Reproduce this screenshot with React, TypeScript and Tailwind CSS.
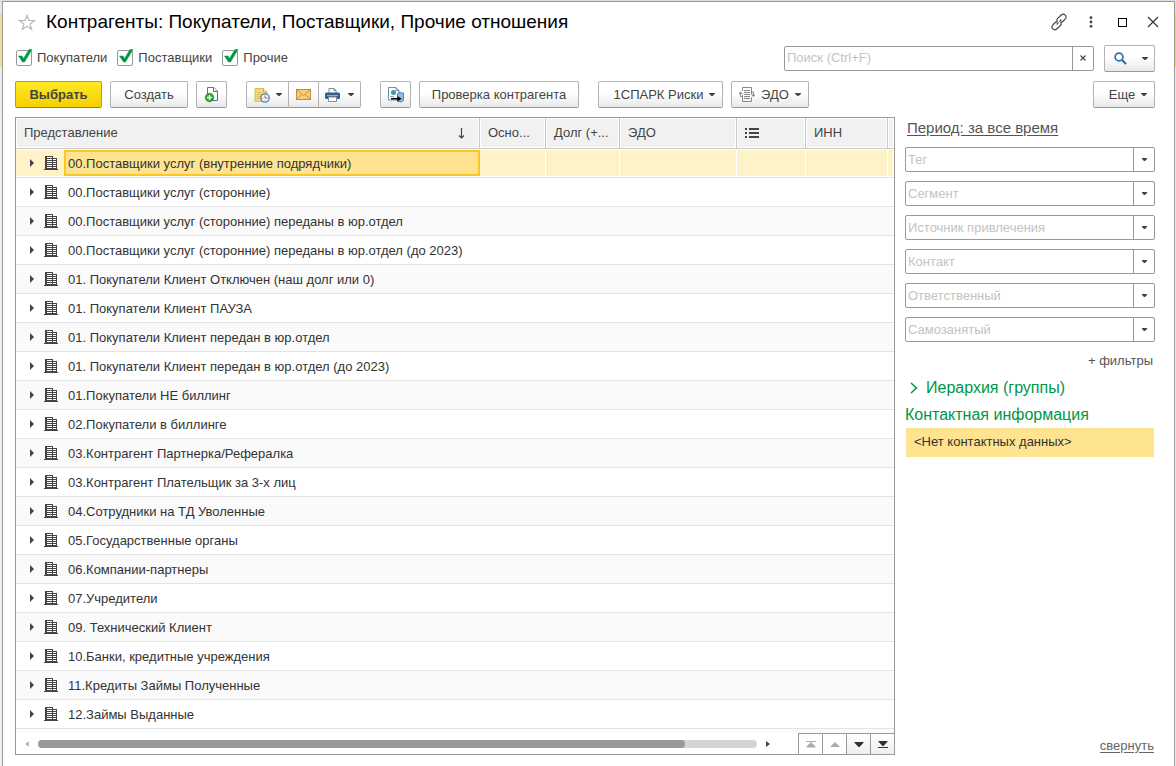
import { ReactNode, useState } from 'react';

const groups = [
  '00.Поставщики услуг (внутренние подрядчики)',
  '00.Поставщики услуг (сторонние)',
  '00.Поставщики услуг (сторонние) переданы в юр.отдел',
  '00.Поставщики услуг (сторонние) переданы в юр.отдел (до 2023)',
  '01. Покупатели Клиент Отключен (наш долг или 0)',
  '01. Покупатели Клиент ПАУЗА',
  '01. Покупатели Клиент передан в юр.отдел',
  '01. Покупатели Клиент передан в юр.отдел (до 2023)',
  '01.Покупатели НЕ биллинг',
  '02.Покупатели в биллинге',
  '03.Контрагент Партнерка/Рефералка',
  '03.Контрагент Плательщик за 3-х лиц',
  '04.Сотрудники на ТД Уволенные',
  '05.Государственные органы',
  '06.Компании-партнеры',
  '07.Учредители',
  '09. Технический Клиент',
  '10.Банки, кредитные учреждения',
  '11.Кредиты Займы Полученные',
  '12.Займы Выданные',
];

const kinds = ['Покупатели', 'Поставщики', 'Прочие'];
const filters = ['Тег', 'Сегмент', 'Источник привлечения', 'Контакт', 'Ответственный', 'Самозанятый'];

const buttonLook =
  'flex h-[27px] items-center justify-center border border-[#b3b3b3] border-b-[#999] bg-linear-to-b from-white from-45% to-[#e9e9e9] text-[13px] text-[#444]';

const Caret = () => (
  <svg width="6" height="3" viewBox="0 0 6 3" fill="#444" className="shrink-0">
    <path d="M0 0h6v.8L3.500 3h-1L0 .8z" />
  </svg>
);

const StarIcon = () => (
  <svg width="18" height="17" viewBox="0 0 18 17" fill="none" stroke="#b5b5b5" strokeWidth="1.1">
    <path d="M9 1.3l1.9 5.2 5.6.1-4.5 3.4 1.7 5.4L9 12.2l-4.7 3.2L6 10 1.5 6.6l5.6-.1z" />
  </svg>
);

const LinkIcon = () => (
  <svg width="18" height="18" viewBox="0 0 18 18" fill="none" stroke="#444" strokeWidth="1.2" strokeLinecap="round">
    <path d="M7 7.500c-.3-.8 0-1.500.6-2.100l3.400-3.200c1.300-1.200 3-1.200 4.200-.1s1.200 2.900 0 4.100l-2.700 2.600c-.5.500-1.100.7-1.800.6" />
    <path d="M11 10.500c.3.8 0 1.500-.6 2.100L7 15.800c-1.300 1.200-3 1.200-4.200.1s-1.200-2.900 0-4.100l2.700-2.600c.5-.5 1.100-.7 1.800-.6" />
    <path d="M7 11l1.200-1.200M9.800 8.200L11 7" />
  </svg>
);

const DotsIcon = () => (
  <svg width="4" height="12" viewBox="0 0 4 12" fill="#444">
    <circle cx="2" cy="1.7" r="1.4" />
    <circle cx="2" cy="6" r="1.4" />
    <circle cx="2" cy="10.3" r="1.4" />
  </svg>
);

const NewDocIcon = () => (
  <svg width="16" height="17" viewBox="0 0 16 17">
    <path d="M3.5 1.5h6.5l3.5 3.5v9.5h-10z" fill="#fff" stroke="#5f7486" />
    <path d="M9.5 1.5v4h4" fill="#dfe7ee" stroke="#5f7486" />
    <circle cx="5.5" cy="11.5" r="4.3" fill="#2ca03a" stroke="#1b8a2b" strokeWidth=".6" />
    <path d="M5.5 9v5M3 11.5h5" stroke="#fff" strokeWidth="1.4" />
  </svg>
);

const NoteClockIcon = () => (
  <svg width="16" height="16" viewBox="0 0 16 16">
    <path d="M1 1.500h8.500L13 5v9.500H1z" fill="#f5d77c" stroke="#dcb860" />
    <path d="M9.500 1.500V5H13" fill="#fbeaaf" stroke="#cfa646" />
    <path d="M3 5.500h5M3 7.500h4M3 9.500h3M3 11.500h3" stroke="#e2c06a" />
    <circle cx="11" cy="11" r="4.100" fill="#fff" stroke="#4c84bd" strokeWidth="1.400" />
    <path d="M11 8.300V11h2.600" fill="none" stroke="#d0402f" />
    <path d="M8.500 11h1M11 12.500v1" stroke="#4c84bd" />
  </svg>
);

const MailIcon = () => (
  <svg width="15" height="11" viewBox="0 0 15 11">
    <rect x=".5" y=".5" width="14" height="10" fill="#f8cc7c" stroke="#c98a35" />
    <path d="M1 1l6.500 5.500L14 1M1 10l4.500-4.500M14 10L9.500 5.500" fill="none" stroke="#cf8f3a" />
  </svg>
);

const PrinterIcon = () => (
  <svg width="15" height="14" viewBox="0 0 15 14">
    <path d="M4 5V.5h5L11 2.500V5" fill="#fff" stroke="#7c8d9c" />
    <path d="M9 .5v2h2" fill="none" stroke="#7c8d9c" />
    <rect x="0" y="4.500" width="15" height="6.500" rx="1.500" fill="#36618d" />
    <path d="M2 7.500h11" stroke="#8fb0cf" />
    <path d="M3.500 9h8v4.500h-8z" fill="#fff" stroke="#7c8d9c" />
  </svg>
);

const TransferIcon = () => (
  <svg width="17" height="17" viewBox="0 0 17 17">
    <path d="M1.500 1.500h7.500l3 3v9.500h-10.500z" fill="#fff" stroke="#7a8b9a" />
    <path d="M9 1.500v3h3" fill="none" stroke="#7a8b9a" />
    <circle cx="6.500" cy="6.500" r="2.500" fill="#3c8fd0" />
    <path d="M5 5.500l2 .5-.5 2.500" fill="none" stroke="#48b04a" strokeWidth="1.300" />
    <path d="M3 10.500h4" stroke="#9aa8b4" />
    <path d="M10.500 7.500l2-1 4 .5v7.500l-2 1.500-4-.5z" fill="#8ebbe2" stroke="#356fa6" strokeWidth=".8" />
    <path d="M4 12.700h7" stroke="#000" strokeWidth="1.500" />
    <path d="M10.500 10l4 2.700-4 2.700z" fill="#000" />
  </svg>
);

const EdoIcon = () => (
  <svg width="16" height="15" viewBox="0 0 16 15" fill="none" stroke="#888">
    <path d="M3.500 4V.5h9V7M12.500 10.500v4h-9V8" />
    <path d="M5 3.500h6M5 5.500h6M5 7.500h6M5 9.500h6M5 11.500h6" />
    <path d="M1.500 6.500v3h2M14.500 8V5h-2" />
    <path d="M-.5 7L1.500 4.500 4 7zM12 7.500h4.500L14.500 10z" fill="#888" stroke="none" />
  </svg>
);

const SearchIcon = () => (
  <svg width="13" height="13" viewBox="0 0 13 13" fill="none" stroke="#2a6fa8">
    <circle cx="5" cy="5" r="3.9" strokeWidth="1.7" />
    <path d="M8 8l4 4" strokeWidth="2.2" />
  </svg>
);

const ListIcon = () => (
  <svg width="14" height="11" viewBox="0 0 14 11" fill="#444">
    <path d="M0 0h2v2H0zM4 0h10v2H4zM0 4h2v2H0zM4 4h10v2H4zM0 8h2v2H0zM4 8h10v2H4z" />
  </svg>
);

const BuildingIcon = () => (
  <svg width="14" height="14" viewBox="0 0 14 14">
    <path d="M1 0h8v2h4v11h1v1H0v-1h1z" fill="#444" />
    <path
      d="M3 1.500h5M3 3.500h5M3 5.500h5M3 7.500h5M3 9.500h5M3 11.500h5M9 3.500h3M9 5.500h3M9 7.500h3M9 9.500h3M9 11.500h3"
      stroke="#fff"
    />
  </svg>
);

const ComboButton = ({ children, label }: { children: ReactNode; label: string }) => (
  <button aria-label={label} className="flex w-[21px] items-center justify-center border-l border-[#999]">
    {children}
  </button>
);

const App = () => {
  const [selected, setSelected] = useState(0);

  return (
    <div className="flex min-h-screen flex-col bg-[#dedede] pt-px font-['Liberation_Sans',Arial,sans-serif] text-[#444]">
      <div className="flex grow">
        {/* Window behind */}
        <div className="flex w-[2px] shrink-0 flex-col">
          <div className="h-[13px] bg-[#e6e6e6]" />
          <div className="h-[53px] bg-[#f0dc9a]" />
          <div className="h-[50px] bg-[#ececec]" />
          <div className="grow bg-[#f0f0f0]" />
        </div>

        <main className="flex min-w-0 grow flex-col border-x border-t border-[#999] bg-white pr-[19px] pb-[11px] pl-3">
          {/* Title */}
          <header className="flex h-10 items-center">
            <button aria-label="В избранное" className="ml-[3px]">
              <StarIcon />
            </button>
            <h1 className="ml-[10px] text-[19px] text-black">Контрагенты: Покупатели, Поставщики, Прочие отношения</h1>
            <div className="-mr-1 ml-auto flex items-center">
              <button aria-label="Ссылка" className="mr-[21px]"><LinkIcon /></button>
              <button aria-label="Меню" className="mr-[25px]"><DotsIcon /></button>
              <button aria-label="Развернуть" className="mr-5 size-[9px] border border-black" />
              <button aria-label="Закрыть">
                <svg width="12" height="12" viewBox="0 0 12 12" stroke="#333" strokeWidth="1.2">
                  <path d="M1 1l10 10M11 1L1 11" />
                </svg>
              </button>
            </div>
          </header>

          {/* Kinds and search */}
          <div className="flex h-8 items-center">
            <div className="ml-px flex gap-[10px]">
              {kinds.map((kind) => (
                <label key={kind} className="flex items-center gap-[5px] text-[13px]">
                  <span className="relative flex size-4">
                    <input
                      type="checkbox"
                      defaultChecked
                      className="peer size-4 appearance-none rounded-xs border border-[#999] bg-white"
                    />
                    <svg
                      width="16"
                      height="16"
                      viewBox="0 0 16 16"
                      className="pointer-events-none absolute inset-0 hidden overflow-visible peer-checked:block"
                    >
                      <path d="M2.500 6h3.500l1.500 2.500L13-.5h3L8.500 12H6.500z" fill="#009646" stroke="#009646" strokeWidth=".5" />
                    </svg>
                  </span>
                  {kind}
                </label>
              ))}
            </div>
            <div className="ml-auto flex h-[25px] w-[310px] rounded-xs border border-[#999]">
              <input
                aria-label="Поиск"
                placeholder="Поиск (Ctrl+F)"
                className="min-w-0 grow px-[2px] text-[13px] outline-none placeholder:text-[#c3c3c3]"
              />
              <ComboButton label="Очистить">
                <svg width="6" height="6" viewBox="0 0 6 6" stroke="#444" strokeWidth="1.1">
                  <path d="M.5.5l5 5M5.500.5l-5 5" />
                </svg>
              </ComboButton>
            </div>
            <button aria-label="Найти" className={`${buttonLook} ml-[10px] w-[51px] gap-[15px] rounded-xs pl-[2px]`}>
              <SearchIcon />
              <Caret />
            </button>
          </div>

          {/* Toolbar */}
          <div className="mt-[7px] flex">
            <button className="flex h-[27px] w-[87px] items-center justify-center rounded-xs border border-[#c0a000] border-b-[#a08500] bg-linear-to-b from-[#ffe91f] to-[#f5d000] text-[13px] font-bold">
              Выбрать
            </button>
            <button className={`${buttonLook} ml-2 w-[78px] rounded-xs`}>Создать</button>
            <button aria-label="Создать группу" className={`${buttonLook} ml-2 w-[31px] rounded-xs`}>
              <NewDocIcon />
            </button>
            <div className="ml-[19px] flex">
              <button aria-label="Напоминание" className={`${buttonLook} w-[43px] gap-[6px] rounded-l-xs`}>
                <NoteClockIcon />
                <Caret />
              </button>
              <button aria-label="Письмо" className={`${buttonLook} w-[30px] border-l-0`}>
                <MailIcon />
              </button>
              <button aria-label="Печать" className={`${buttonLook} w-[42px] gap-2 rounded-r-xs border-l-0`}>
                <PrinterIcon />
                <Caret />
              </button>
            </div>
            <button aria-label="Перенести" className={`${buttonLook} ml-[19px] w-[31px] rounded-xs`}>
              <TransferIcon />
            </button>
            <button className={`${buttonLook} ml-2 w-40 rounded-xs`}>Проверка контрагента</button>
            <button className={`${buttonLook} ml-[19px] w-[125px] gap-[6px] rounded-xs pl-2`}>
              1СПАРК Риски
              <Caret />
            </button>
            <button className={`${buttonLook} ml-2 w-[78px] gap-[6px] rounded-xs`}>
              <EdoIcon />
              ЭДО
              <Caret />
            </button>
            <button className={`${buttonLook} ml-auto w-[62px] gap-[6px] rounded-xs pl-2`}>
              Еще
              <Caret />
            </button>
          </div>

          <div className="mt-[9px] flex grow gap-[10px]">
            {/* List */}
            <section className="flex min-w-0 grow flex-col border border-[#999]">
              <table className="w-full table-fixed border-separate border-spacing-0 text-[13px]">
                <colgroup>
                  <col />
                  <col className="w-[66px]" />
                  <col className="w-[74px]" />
                  <col className="w-[117px]" />
                  <col className="w-[69px]" />
                  <col className="w-[82px]" />
                  <col className="w-[6px]" />
                </colgroup>
                <thead>
                  <tr className="h-[31px] text-left *:border-r *:border-b *:border-[#c8c8c8] *:bg-[#f1f1f1] *:px-2 *:font-normal *:whitespace-nowrap *:shadow-[inset_0_0_0_1px_#fff] *:last:border-r-0 *:last:p-0">
                    <th>
                      <span className="flex items-center justify-between pr-[6px]">
                        Представление
                        <svg width="7" height="11" viewBox="0 0 7 11" fill="none" stroke="#444" strokeWidth="1.2">
                          <path d="M3.5 0v10M1 7.5l2.5 2.5L6 7.5" />
                        </svg>
                      </span>
                    </th>
                    <th>Осно...</th>
                    <th>Долг (+...</th>
                    <th>ЭДО</th>
                    <th aria-label="Список"><ListIcon /></th>
                    <th>ИНН</th>
                    <th />
                  </tr>
                </thead>
                <tbody>
                  {groups.map((name, index) => {
                    const active = index === selected;
                    return (
                      <tr
                        key={name}
                        onClick={() => setSelected(index)}
                        className="h-[29px] odd:bg-[#fafafa] *:border-b *:border-[#e4e4e4] *:p-0"
                      >
                        <td className={active ? 'bg-white' : ''}>
                          <div className={`flex h-[26px] items-center ${active ? 'bg-[#fdf2c8]' : ''}`}>
                            <svg width="4" height="8" viewBox="0 0 4 8" fill="#444" className="ml-[14px]">
                              <path d="M0 0l4 4-4 4z" />
                            </svg>
                            <span className="ml-[10px]"><BuildingIcon /></span>
                            <span
                              className={`ml-[6px] flex h-[26px] grow items-center border-2 px-[2px] pt-[2px] text-[#333] ${
                                active ? 'border-[#f9c623] bg-[#fee491]' : 'border-transparent'
                              }`}
                            >
                              {name}
                            </span>
                          </div>
                        </td>
                        {[1, 2, 3, 4, 5, 6].map((column) => (
                          <td key={column} className={active ? 'bg-white' : ''}>
                            <div className={`mr-px h-[26px] ${active ? 'bg-[#fdf2c8]' : ''}`} />
                          </td>
                        ))}
                      </tr>
                    );
                  })}
                </tbody>
              </table>

              {/* Scroll bar */}
              <div className="h-1 bg-[#fafafa]" />
              <div className="flex h-[21px] grow">
                <div className="flex grow items-center gap-[9px] pr-7 pl-[9px]">
                  <svg width="4" height="6" viewBox="0 0 4 6" fill="#bbb">
                    <path d="M4 0v6L0 3z" />
                  </svg>
                  <div className="h-2 grow rounded-full bg-[#d4d4d4]">
                    <div className="h-2 w-[90%] rounded-full bg-[#999]" />
                  </div>
                  <svg width="4" height="6" viewBox="0 0 4 6" fill="#444">
                    <path d="M0 0l4 3-4 3z" />
                  </svg>
                </div>
                <div className="flex *:flex *:w-6 *:items-center *:justify-center *:border-t *:border-l *:border-[#999]">
                  <button aria-label="В начало">
                    <svg width="10" height="7" viewBox="0 0 10 7" fill="#aaa">
                      <path d="M0 0h10v1H0zM5 1l4.500 4.500V6.500h-9v-1z" />
                    </svg>
                  </button>
                  <button aria-label="Вверх">
                    <svg width="10" height="5" viewBox="0 0 10 5" fill="#aaa">
                      <path d="M5 0l4.500 4.500v.5h-9v-.5z" />
                    </svg>
                  </button>
                  <button aria-label="Вниз" className="bg-linear-to-b from-white to-[#eee]">
                    <svg width="10" height="5" viewBox="0 0 10 5" fill="#333">
                      <path d="M.5 0h9v.8L5.500 5h-1L.5.8z" />
                    </svg>
                  </button>
                  <button aria-label="В конец" className="bg-linear-to-b from-white to-[#eee]">
                    <svg width="10" height="7" viewBox="0 0 10 7" fill="#333">
                      <path d="M.5 0h9v.8L5.500 5h-1L.5.8zM0 6h10v1H0z" />
                    </svg>
                  </button>
                </div>
              </div>
            </section>

            {/* Filters */}
            <aside className="flex w-[250px] shrink-0 flex-col">
              <a href="#period" className="ml-[2px] h-[30px] text-[15px] text-[#555] underline underline-offset-2">
                Период: за все время
              </a>
              <div className="flex flex-col gap-[9px]">
                {filters.map((filter) => (
                  <div key={filter} className="flex h-[25px] rounded-xs border border-[#999]">
                    <input
                      aria-label={filter}
                      placeholder={filter}
                      className="min-w-0 grow px-[2px] text-[13px] outline-none placeholder:text-[#c3c3c3]"
                    />
                    <ComboButton label={`Выбрать: ${filter}`}>
                      <svg width="5" height="3" viewBox="0 0 5 3" fill="#444">
                        <path d="M0 0h5v1L3 3H2L0 1z" />
                      </svg>
                    </ComboButton>
                  </div>
                ))}
              </div>
              <button className="mt-[9px] mr-[2px] self-end text-[13px] text-[#555]">+ фильтры</button>
              <button className="mt-[5px] flex items-center gap-2 pl-[5px] text-base text-[#009646]">
                <svg width="8" height="12" viewBox="0 0 8 12" fill="none" stroke="#009646" strokeWidth="1.5">
                  <path d="M1 1l5.5 5L1 11" />
                </svg>
                Иерархия (группы)
              </button>
              <h2 className="mt-[3px] text-base text-[#009646]">Контактная информация</h2>
              <div className="mx-px mt-px flex h-[29px] items-center bg-[#fee491] px-2 text-[13px] text-[#333]">
                &lt;Нет контактных данных&gt;
              </div>
              <a href="#collapse" className="mt-auto mr-px self-end text-[13px] text-[#666] underline underline-offset-2">
                свернуть
              </a>
            </aside>
          </div>
        </main>

        <div className="flex w-px shrink-0 flex-col">
          <div className="h-[13px]" />
          <div className="h-[53px] bg-[#f0d070]" />
          <div className="grow bg-[#ececec]" />
        </div>
      </div>
    </div>
  );
};

export default App;
